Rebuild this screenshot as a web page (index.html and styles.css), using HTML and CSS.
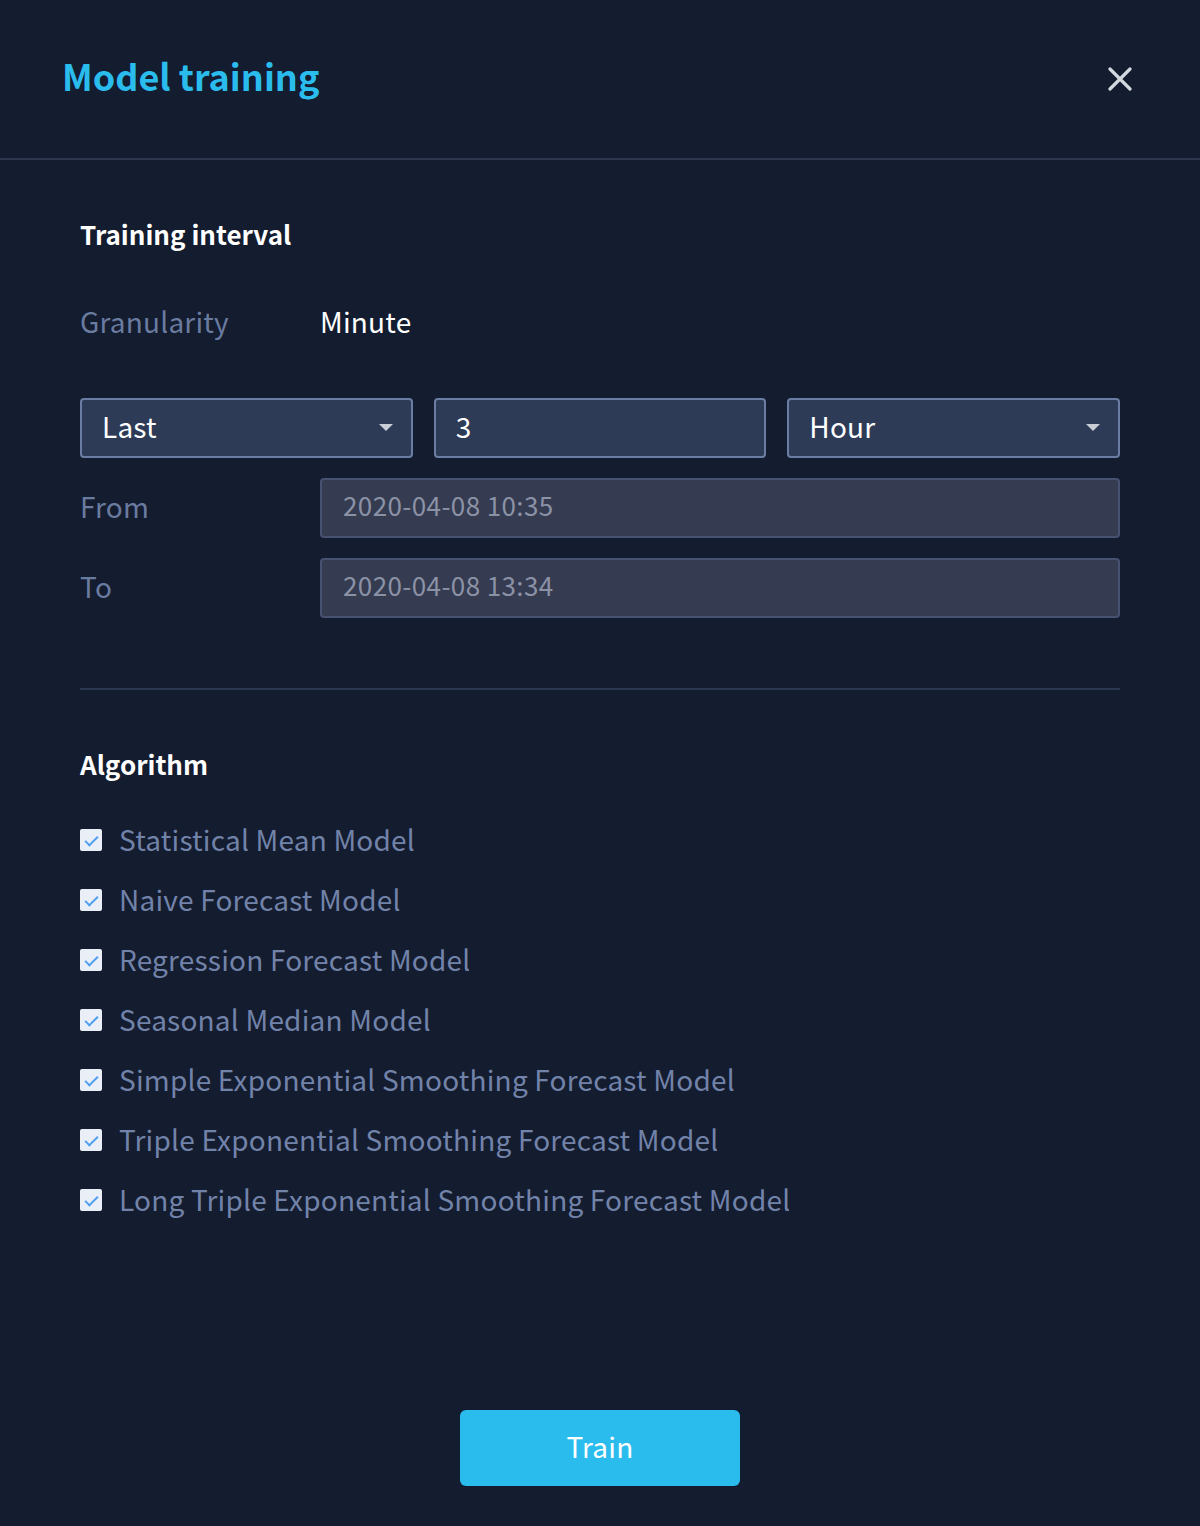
FILE: index.html
```html
<!DOCTYPE html>
<html>
<head>
<meta charset="utf-8">
<link rel="stylesheet" href="styles.css">
</head>
<body>
<div class="dialog">
  <div class="header">
    <h1 class="title">Model training</h1>
    <button class="close" aria-label="Close">
      <svg width="24" height="24" viewBox="0 0 24 24"><path d="M2 2 L22 22 M22 2 L2 22" stroke="#d4d8e0" stroke-width="3.2" stroke-linecap="round"/></svg>
    </button>
  </div>
  <div class="content">
    <h2 class="section-title first">Training interval</h2>
    <div class="gran-row">
      <span class="label">Granularity</span>
      <span class="value">Minute</span>
    </div>
    <div class="select-row">
      <div class="field select"><span>Last</span><span class="caret"></span></div>
      <div class="field"><span>3</span></div>
      <div class="field select"><span>Hour</span><span class="caret"></span></div>
    </div>
    <div class="date-row">
      <span class="label">From</span>
      <div class="field disabled">2020-04-08 10:35</div>
    </div>
    <div class="date-row">
      <span class="label">To</span>
      <div class="field disabled">2020-04-08 13:34</div>
    </div>
    <div class="divider"></div>
    <h2 class="section-title">Algorithm</h2>
    <ul class="algos">
      <li><span class="cb"></span>Statistical Mean Model</li>
      <li><span class="cb"></span>Naive Forecast Model</li>
      <li><span class="cb"></span>Regression Forecast Model</li>
      <li><span class="cb"></span>Seasonal Median Model</li>
      <li><span class="cb"></span>Simple Exponential Smoothing Forecast Model</li>
      <li><span class="cb"></span>Triple Exponential Smoothing Forecast Model</li>
      <li><span class="cb"></span>Long Triple Exponential Smoothing Forecast Model</li>
    </ul>
    <div class="actions">
      <button class="train">Train</button>
    </div>
  </div>
</div>
</body>
</html>
```

FILE: styles.css
```css
* { box-sizing: border-box; }
html, body {
  margin: 0;
  padding: 0;
  background: #141c2f;
}
body {
  font-family: "Noto Sans CJK JP", "Source Sans Pro", "Open Sans", sans-serif;
  color: #ffffff;
  letter-spacing: 0.2px;
}
.dialog {
  width: 1200px;
  height: 1526px;
  background: #141c2f;
}
.header {
  height: 160px;
  border-bottom: 2px solid #2c374e;
  display: flex;
  align-items: center;
  justify-content: space-between;
  padding: 0 68px 0 62px;
}
.title {
  margin: 0 0 8px 0;
  font-size: 36px;
  font-weight: 700;
  line-height: 50px;
  letter-spacing: 0;
  color: #2bbcee;
}
.close {
  background: none;
  border: 0;
  padding: 0;
  width: 24px;
  height: 24px;
  display: flex;
  cursor: pointer;
}
.content {
  padding: 0 80px;
}
.section-title {
  margin: 54px 0 0 0;
  font-size: 26px;
  font-weight: 700;
  line-height: 40px;
  letter-spacing: 0;
  color: #ffffff;
}
.gran-row {
  margin-top: 48px;
  display: flex;
  align-items: center;
  height: 40px;
  padding-bottom: 3px;
  font-size: 28px;
}
.label {
  color: #6a7ba0;
  font-size: 28px;
  width: 240px;
  flex: none;
}
.value {
  color: #ffffff;
}
.select-row {
  margin-top: 56px;
  display: grid;
  grid-template-columns: 1fr 1fr 1fr;
  gap: 21px;
}
.field {
  height: 60px;
  border: 2px solid #6b7da3;
  border-radius: 4px;
  background: #2e3b57;
  display: flex;
  align-items: center;
  justify-content: space-between;
  padding: 0 18px 5px 20px;
  font-size: 28px;
  color: #ffffff;
}
.caret {
  width: 0;
  height: 0;
  margin-top: 4px;
  border-left: 7px solid transparent;
  border-right: 7px solid transparent;
  border-top: 7px solid #c9cdd6;
}
.date-row {
  margin-top: 20px;
  display: flex;
  align-items: center;
}
.date-row .label {
  padding-bottom: 4px;
}
.date-row .field {
  flex: 1;
}
.field.disabled {
  background: #353b50;
  border-color: #475270;
  color: #8b92a6;
  font-size: 26px;
  letter-spacing: 0.4px;
  padding: 0 20px 7px 21px;
}
.divider {
  margin-top: 70px;
  height: 2px;
  background: #2a3650;
}
.algos {
  list-style: none;
  margin: 27px 0 0 0;
  padding: 0;
}
.algos li {
  height: 60px;
  display: flex;
  align-items: center;
  font-size: 28px;
  color: #7283aa;
}
.cb {
  width: 22px;
  height: 22px;
  flex: none;
  margin-right: 17px;
  margin-top: 2px;
  background: #e9eef7;
  border-radius: 2px;
  position: relative;
}
.algos li span.txt { }
.cb::after {
  content: "";
  position: absolute;
  left: 5px;
  top: 3px;
  width: 11px;
  height: 5px;
  border-left: 2.5px solid #4f9ff0;
  border-bottom: 2.5px solid #4f9ff0;
  transform: translate(0, 4px) rotate(-45deg);
}
.algos li {
  padding-bottom: 4px;
}
.actions {
  margin-top: 179px;
  display: flex;
  justify-content: center;
}
.train {
  width: 280px;
  height: 76px;
  border: 0;
  border-radius: 6px;
  background: #2bbcee;
  color: #ffffff;
  font-family: inherit;
  font-size: 28px;
  letter-spacing: 0.2px;
  padding: 0 0 5px 0;
  cursor: pointer;
}
```
